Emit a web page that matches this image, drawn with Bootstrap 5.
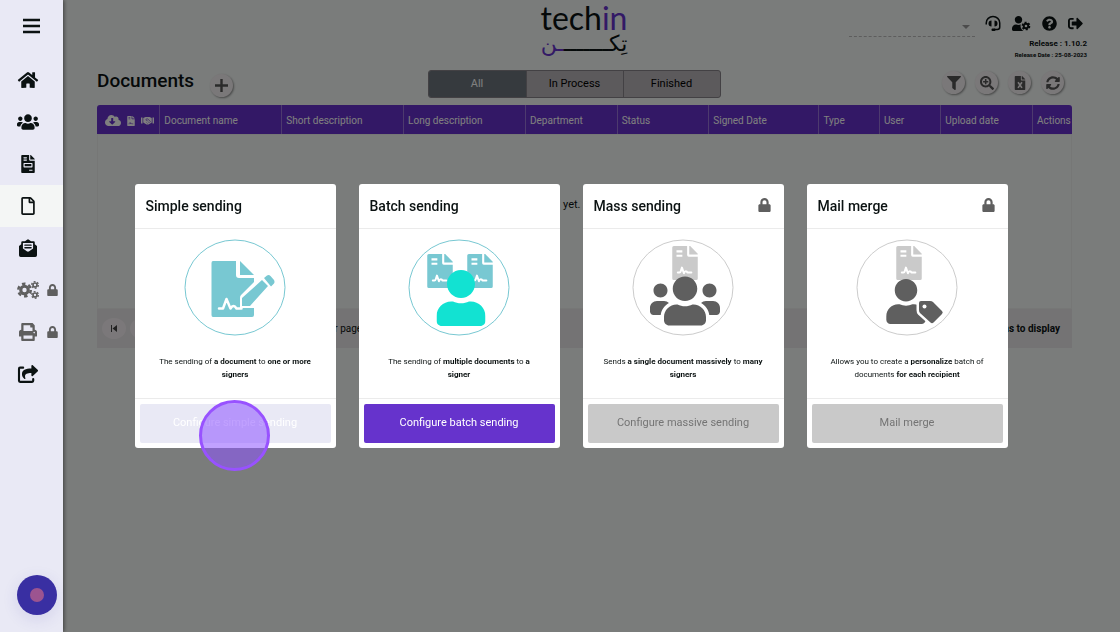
<!DOCTYPE html>
<html lang="en">
<head>
<meta charset="utf-8">
<meta name="viewport" content="width=device-width, initial-scale=1">
<title>Documents</title>
<link href="https://cdn.jsdelivr.net/npm/bootstrap@5.3.0/dist/css/bootstrap.min.css" rel="stylesheet">
<style>
body{font-family:Roboto,"Liberation Sans",sans-serif;background:#f4f8f6;color:#0b1212;font-size:11px;min-height:100vh}
svg{fill:currentColor;display:block;flex:none}
a{color:inherit;text-decoration:none}
.side{width:63px;background:#e9e9f5;z-index:30;box-shadow:1px 0 4px rgba(0,0,0,.5);color:#0b1212}
.side .menu-btn{height:59px;padding:18px 0 0 23px}
.side .entry{height:42px;padding-left:17px;gap:8px}
.side .entry.active{background:#f4f6f5}
.side .locked{color:#5f5f5f}
.side .ico{width:22px;height:18px}
.rec{width:40px;height:40px;background:#392fa2;margin:0 0 17px 17px;box-shadow:0 4px 16px rgba(57,47,162,.12)}
.rec span{width:14px;height:14px;background:#9c5490}
.top{display:grid;grid-template-columns:1fr auto 1fr;height:62px;padding:0 33px 0 18px}
.brand{font-family:Lato,sans-serif;font-size:32px;line-height:36px}
.brand .ar{font-family:"DejaVu Sans",sans-serif;font-size:22px;line-height:16px}
.violet{color:#6633cc}
.org{width:126px;height:22px;border:0;border-bottom:1px dashed #bbb;border-radius:0;background:none;appearance:none}
.orgbox{padding-top:15px;margin-right:10px}
.caret{position:absolute;right:5px;top:25px;border:4px solid transparent;border-top-color:#999;border-bottom:0}
.tools{gap:11px;padding-top:15px;height:36px}
.release{font-size:8px;line-height:14px}
.reldate{font-size:6px;line-height:8px}
.work{padding:0 48px 0 34px}
.bar{display:grid;grid-template-columns:34% auto 1fr;height:43px;padding-top:8px}
h1{font-size:19px;line-height:22px;font-weight:500;margin:0}
.round{width:23px;height:23px;border:0;border-radius:50%;background:#f5f0f2;color:#555;padding:0;box-shadow:1px 1px 2px rgba(0,0,0,.4)}
.round-set{gap:10px;padding:1px 8px 0 0}
.seg{height:28px;border:1px solid #868288;border-radius:3px;overflow:hidden;background:#b9b5b8;margin-left:-1px}
.seg button{width:97px;border:0;border-left:1px solid #868288;background:none;font-size:11px}
.seg button.on{background:#6c757d;color:#fff;border:0}
.docs{table-layout:fixed;width:100%;margin:0;border-collapse:separate;border-spacing:0;border-radius:3px 3px 0 0;overflow:hidden;font-size:10px}
.docs th{background:#6630cc;color:#fff;font-weight:400;height:29px;padding:2px 3px 0 4px;border-right:1px solid #9a75dd;white-space:nowrap}
.docs th:last-child{border-right:0;padding-right:0}
.docs td{height:175px;padding:0;vertical-align:top;border:1px solid #eceeed}
.empty{width:50%;padding:62px 4px 0 0;font-size:11px;line-height:16px}
.pager{height:39px;background:#e9e6e8;padding:0 12px 0 5px;font-size:10px}
.pager .pg{width:24px;height:21px;border:0;border-radius:50%;background:#f6f1f4;color:#444;padding:0}
.pager .per{margin-left:142px}
.shade{inset:0;background:rgba(0,0,0,.5);z-index:10}
.choices{inset:0;z-index:20;padding-left:22px}
.deck{width:873px;gap:23px}
.choice{flex:1 1 0;background:#fff;border-radius:3px;min-width:0}
.choice header{height:45px;padding:0 13px 0 11px;border-bottom:1px solid #ebebeb}
.choice header svg{margin-bottom:3px}
.choice h2{font-size:14px;font-weight:500;margin:0}
.choice .mid{height:169px;padding:10px 19px 0}
.choice .mid p{font-size:8px;line-height:13px;margin:19px 0 0}
.choice b{font-weight:700}
.choice footer{padding:5px;border-top:1px solid #ebebeb}
.choice footer .btn{height:39px;font-size:11px;border:0;border-radius:2px;padding:0;color:#fff;background:#6633cc;opacity:1}
.choice footer .pressed{background:#e9e9f5;color:#fff}
.choice footer .btn:disabled{background:#c9c9c9;color:#747474}
.lock{color:#5f5f5f}
.tap{width:71px;height:71px;border:3px solid #9852ff;background:rgba(142,84,255,.55);left:50%;margin-left:-36px;bottom:-23px}
</style>
</head>
<body class="d-flex">
<svg width="0" height="0" class="position-absolute" aria-hidden="true"><defs>
<symbol id="home" viewBox="0 0 576 512"><path d="M280.37 148.26L96 300.11V464a16 16 0 0 0 16 16l112.06-.29a16 16 0 0 0 15.92-16V368a16 16 0 0 1 16-16h64a16 16 0 0 1 16 16v95.64a16 16 0 0 0 16 16.05L464 480a16 16 0 0 0 16-16V300L295.67 148.26a12.19 12.19 0 0 0-15.3 0zM571.6 251.47L488 182.56V44.05a12 12 0 0 0-12-12h-56a12 12 0 0 0-12 12v72.61L318.47 43a48 48 0 0 0-61 0L4.34 251.47a12 12 0 0 0-1.6 16.9l25.5 31A12 12 0 0 0 45.15 301l235.22-193.74a12.19 12.19 0 0 1 15.3 0L530.9 301a12 12 0 0 0 16.9-1.6l25.5-31a12 12 0 0 0-1.7-16.93z"/></symbol>
<symbol id="users" viewBox="0 0 640 512"><path d="M96 224c35.3 0 64-28.7 64-64s-28.7-64-64-64-64 28.7-64 64 28.7 64 64 64zm448 0c35.3 0 64-28.7 64-64s-28.7-64-64-64-64 28.7-64 64 28.7 64 64 64zm32 32h-64c-17.6 0-33.5 7.1-45.1 18.6 40.3 22.1 68.9 62 75.1 109.4h66c17.7 0 32-14.3 32-32v-32c0-35.3-28.7-64-64-64zm-256 0c61.9 0 112-50.1 112-112S381.9 32 320 32 208 82.1 208 144s50.1 112 112 112zm76.8 32h-8.3c-20.8 10-43.9 16-68.5 16s-47.6-6-68.5-16h-8.3C179.6 288 128 339.6 128 403.2V432c0 26.5 21.5 48 48 48h288c26.5 0 48-21.5 48-48v-28.8c0-63.6-51.6-115.2-115.2-115.2zm-223.7-13.4C161.5 263.1 145.6 256 128 256H64c-35.3 0-64 28.7-64 64v32c0 17.7 14.3 32 32 32h65.9c6.3-47.4 34.9-87.3 75.2-109.4z"/></symbol>
<symbol id="user" viewBox="0 0 448 512"><path d="M224 256c70.7 0 128-57.3 128-128S294.7 0 224 0 96 57.3 96 128s57.3 128 128 128zm89.6 32h-16.7c-22.2 10.2-46.9 16-72.9 16s-50.6-5.8-72.9-16h-16.7C60.2 288 0 348.2 0 422.4V464c0 26.5 21.5 48 48 48h352c26.5 0 48-21.5 48-48v-41.6c0-74.2-60.2-134.4-134.4-134.4z"/></symbol>
<symbol id="lock" viewBox="0 0 448 512"><path d="M400 224h-24v-72C376 68.2 307.8 0 224 0S72 68.2 72 152v72H48c-26.5 0-48 21.5-48 48v192c0 26.5 21.5 48 48 48h352c26.5 0 48-21.5 48-48V272c0-26.5-21.5-48-48-48zm-104 0H152v-72c0-39.7 32.3-72 72-72s72 32.3 72 72v72z"/></symbol>
<symbol id="file" viewBox="0 0 384 512"><path d="M369.9 97.9L286 14C277 5 264.8-.1 252.1-.1H48C21.5 0 0 21.5 0 48v416c0 26.5 21.5 48 48 48h288c26.5 0 48-21.5 48-48V131.9c0-12.7-5.1-25-14.1-34zM332.1 128H256V51.9l76.1 76.1zM48 464V48h160v104c0 13.3 10.7 24 24 24h104v288H48z"/></symbol>
<symbol id="invoice" viewBox="0 0 384 512"><path d="M288 256H96v64h192v-64zm89-151L279.1 7c-4.5-4.5-10.6-7-17-7H256v128h128v-6.1c0-6.3-2.5-12.4-7-16.9zm-153 31V0H24C10.7 0 0 10.7 0 24v464c0 13.3 10.7 24 24 24h336c13.3 0 24-10.7 24-24V160H248c-13.2 0-24-10.8-24-24zM64 72c0-4.42 3.58-8 8-8h80c4.42 0 8 3.58 8 8v16c0 4.42-3.58 8-8 8H72c-4.42 0-8-3.58-8-8V72zm0 64c0-4.42 3.58-8 8-8h80c4.42 0 8 3.58 8 8v16c0 4.42-3.58 8-8 8H72c-4.42 0-8-3.58-8-8v-16zm256 304c0 4.42-3.58 8-8 8h-80c-4.42 0-8-3.58-8-8v-16c0-4.42 3.58-8 8-8h80c4.42 0 8 3.58 8 8v16zm0-200v96c0 8.84-7.16 16-16 16H80c-8.84 0-16-7.16-16-16v-96c0-8.84 7.16-16 16-16h224c8.84 0 16 7.16 16 16z"/></symbol>
<symbol id="contract" viewBox="0 0 384 512"><path d="M224 0H24Q0 0 0 24V488Q0 512 24 512H360Q384 512 384 488V160H248Q224 160 224 136Z"/><path d="M64 80H152M64 146H152" stroke="var(--ink,#fff)" stroke-width="32"/><path d="M256 0V128H384V115L270 0Z"/><path d="M84 400h24q14 0 20-20l18-54 30 84q10-30 28-30t24 18h60" fill="none" stroke="var(--ink,#fff)" stroke-width="30" stroke-linecap="round" stroke-linejoin="round"/></symbol>
<symbol id="mail" viewBox="0 0 512 512"><path d="M0 200 64 152V96Q64 64 96 64H170L230 18Q256-2 282 18L342 64H416Q448 64 448 96V152L512 200V464Q512 512 464 512H48Q0 512 0 464Z"/><path d="M112 112H400V270L290 350Q256 374 222 350L112 270Z" fill="#e9e9f5"/><path d="M168 176H344M168 250H344" stroke="currentColor" stroke-width="38" stroke-linecap="round"/></symbol>
<symbol id="gear" viewBox="0 0 24 24"><g fill="none" stroke="currentColor"><circle cx="12" cy="12" r="6" stroke-width="5"/><circle cx="12" cy="12" r="10" stroke-width="4" stroke-dasharray="5.6 4.87"/></g></symbol>
<symbol id="print" viewBox="0 0 512 512"><path d="M448 192V77.25c0-8.49-3.37-16.62-9.37-22.63L393.37 9.37c-6-6-14.14-9.37-22.63-9.37H96C78.33 0 64 14.33 64 32v160c-35.35 0-64 28.65-64 64v112c0 8.84 7.16 16 16 16h48v96c0 17.67 14.33 32 32 32h320c17.67 0 32-14.33 32-32v-96h48c8.84 0 16-7.16 16-16V256c0-35.35-28.65-64-64-64zm-64 256H128v-96h256v96zm0-224H128V64h192v48c0 8.84 7.16 16 16 16h48v96zm48 72c-13.25 0-24-10.75-24-24 0-13.26 10.75-24 24-24s24 10.74 24 24c0 13.25-10.75 24-24 24z"/></symbol>
<symbol id="share" viewBox="0 0 576 512"><path d="M150 76H62Q32 76 32 106V450Q32 480 62 480H406Q436 480 436 450V400" fill="none" stroke="currentColor" stroke-width="60" stroke-linecap="round"/><path d="M568 177 424 313C409 327 384 317 384 296V224C236 226 178 262 214 378 218 393 201 404 188 395 150 367 116 315 116 262 116 132 222 98 384 96V24C384 3 409-7 424 7L568 143Q578 155 568 177Z"/></symbol>
<symbol id="filter" viewBox="0 0 512 512"><path d="M487.976 0H24.028C2.71 0-8.047 25.866 7.058 40.971L192 225.941V432c0 7.831 3.821 15.17 10.237 19.662l80 55.98C298.02 518.69 320 507.493 320 487.98V225.941l184.947-184.97C520.021 25.896 509.338 0 487.976 0z"/></symbol>
<symbol id="zoomin" viewBox="0 0 512 512"><path d="M304 192v32c0 6.6-5.4 12-12 12h-56v56c0 6.6-5.4 12-12 12h-32c-6.6 0-12-5.4-12-12v-56h-56c-6.6 0-12-5.4-12-12v-32c0-6.6 5.4-12 12-12h56v-56c0-6.6 5.4-12 12-12h32c6.6 0 12 5.4 12 12v56h56c6.6 0 12 5.4 12 12zm201 284.7L476.7 505c-9.4 9.4-24.6 9.4-33.9 0L343 405.3c-4.5-4.5-7-10.6-7-17V372c-35.3 27.6-79.7 44-128 44C93.1 416 0 322.9 0 208S93.1 0 208 0s208 93.1 208 208c0 48.3-16.4 92.7-44 128h16.3c6.4 0 12.5 2.5 17 7l99.7 99.7c9.3 9.4 9.3 24.6 0 34zM344 208c0-75.2-60.8-136-136-136S72 132.8 72 208s60.8 136 136 136 136-60.8 136-136z"/></symbol>
<symbol id="excel" viewBox="0 0 384 512"><path d="M224 0H24Q0 0 0 24V488Q0 512 24 512H360Q384 512 384 488V160H248Q224 160 224 136Z"/><path d="M256 0V128H384V115L270 0Z"/><path d="M120 226 264 436M264 226 120 436" stroke="#f5f0f2" stroke-width="58"/></symbol>
<symbol id="sync" viewBox="0 0 512 512"><path d="M370.72 133.28C339.458 104.008 298.888 87.962 255.848 88c-77.458.068-144.328 53.178-162.791 126.85-1.344 5.363-6.122 9.15-11.651 9.15H24.103c-7.498 0-13.194-6.807-11.807-14.176C33.933 94.924 134.813 8 256 8c66.448 0 126.791 26.136 171.315 68.685L463.03 40.97C478.149 25.851 504 36.559 504 57.941V192c0 13.255-10.745 24-24 24H345.941c-21.382 0-32.09-25.851-16.971-40.971l41.75-41.749zM32 296h134.059c21.382 0 32.09 25.851 16.971 40.971l-41.75 41.75c31.262 29.273 71.835 45.319 114.876 45.28 77.418-.07 144.315-53.144 162.787-126.849 1.344-5.363 6.122-9.15 11.651-9.15h57.304c7.498 0 13.194 6.807 11.807 14.176C478.067 417.076 377.187 504 256 504c-66.448 0-126.791-26.136-171.315-68.685L48.97 471.03C33.851 486.149 8 475.441 8 454.059V320c0-13.255 10.745-24 24-24z"/></symbol>
<symbol id="help" viewBox="0 0 512 512"><path d="M504 256c0 136.997-111.043 248-248 248S8 392.997 8 256C8 119.083 119.043 8 256 8s248 111.083 248 248zM262.655 90c-54.497 0-89.255 22.957-116.549 63.758-3.536 5.286-2.353 12.415 2.715 16.258l34.699 26.31c5.205 3.947 12.621 3.008 16.665-2.122 17.864-22.658 30.113-35.797 57.303-35.797 20.429 0 45.698 13.148 45.698 32.958 0 14.976-12.363 22.667-32.534 33.976C247.128 238.528 216 254.941 216 296v4c0 6.627 5.373 12 12 12h56c6.627 0 12-5.373 12-12v-1.333c0-28.462 83.186-29.647 83.186-106.667 0-58.002-60.165-102-116.531-102zM256 338c-25.365 0-46 20.635-46 46 0 25.364 20.635 46 46 46s46-20.636 46-46c0-25.365-20.635-46-46-46z"/></symbol>
<symbol id="exit" viewBox="0 0 512 512"><path d="M497 273L329 441c-15 15-41 4.5-41-17v-96H152c-13.3 0-24-10.7-24-24v-96c0-13.3 10.7-24 24-24h136V88c0-21.4 25.9-32 41-17l168 168c9.3 9.4 9.3 24.6 0 34zM192 436v-40c0-6.6-5.4-12-12-12H96c-17.7 0-32-14.3-32-32V160c0-17.7 14.3-32 32-32h84c6.6 0 12-5.4 12-12V76c0-6.6-5.4-12-12-12H96c-53 0-96 43-96 96v192c0 53 43 96 96 96h84c6.6 0 12-5.4 12-12z"/></symbol>
<symbol id="cloud" viewBox="0 0 640 512"><path d="M537.6 226.6c4.1-10.7 6.4-22.4 6.4-34.6 0-53-43-96-96-96-19.7 0-38.1 6-53.3 16.2C367 64.2 315.3 32 256 32c-88.4 0-160 71.6-160 160 0 2.7.1 5.4.2 8.1C40.2 219.8 0 273.2 0 336c0 79.5 64.5 144 144 144h368c70.7 0 128-57.3 128-128 0-61.9-44-113.6-102.4-125.4zm-132.9 88.7L299.3 420.7c-6.2 6.2-16.4 6.2-22.6 0L171.3 315.3c-10.1-10.1-2.9-27.3 11.3-27.3H248V176c0-8.8 7.2-16 16-16h48c8.8 0 16 7.2 16 16v112h65.4c14.2 0 21.4 17.2 11.3 27.3z"/></symbol>
<symbol id="hands" viewBox="0 0 26 18"><path d="M0 3h3v12H0zM23 3h3v12h-3zM4.500 4 9 2h8l4.500 2v9L15 17h-4L4.500 13z"/><path d="M13 4 9.500 8q2 2 4 0l1-1 5 4.500M11 13l2 2M14 11l3 3" fill="none" stroke="#6630cc" stroke-width="1.300"/></symbol>
<symbol id="headset" viewBox="0 0 32 32"><g fill="none" stroke="currentColor" stroke-width="3"><path d="M2.500 18V15a13.500 13 0 0 1 27 0V23q0 5-5 5H18"/></g><path d="M13 10v12q-6 0-6-6t6-6zM19 10v12q6 0 6-6t-6-6z"/><rect x="13" y="26" width="8" height="5" rx="2"/></symbol>
</defs></svg>

<nav class="side d-flex flex-column position-sticky top-0 vh-100 flex-shrink-0" aria-label="Main">
  <button class="menu-btn btn border-0 rounded-0 d-flex align-items-start" aria-label="Menu"><svg width="17" height="16" viewBox="0 0 17 16"><path d="M0 2h17M0 8h17M0 14h17" stroke="#0b1212" stroke-width="2.400"/></svg></button>
  <a href="#" class="entry d-flex align-items-center" aria-label="Home"><svg class="ico"><use href="#home"/></svg></a>
  <a href="#" class="entry d-flex align-items-center" aria-label="Contacts"><svg class="ico"><use href="#users"/></svg></a>
  <a href="#" class="entry d-flex align-items-center" aria-label="Templates"><svg class="ico"><use href="#invoice"/></svg></a>
  <a href="#" class="entry active d-flex align-items-center" aria-label="Documents"><svg class="ico"><use href="#file"/></svg></a>
  <a href="#" class="entry d-flex align-items-center" aria-label="Inbox"><svg class="ico"><use href="#mail"/></svg></a>
  <a href="#" class="entry locked d-flex align-items-center" aria-label="Settings"><svg class="ico" viewBox="0 0 22 18"><use href="#gear" x="0" y="1" width="15" height="16"/><use href="#gear" x="14" y="0" width="8" height="8"/><use href="#gear" x="14" y="10" width="8" height="8"/></svg><svg width="11" height="12"><use href="#lock"/></svg></a>
  <a href="#" class="entry locked d-flex align-items-center" aria-label="Print"><svg class="ico"><use href="#print"/></svg><svg width="11" height="12"><use href="#lock"/></svg></a>
  <a href="#" class="entry d-flex align-items-center" aria-label="Share"><svg class="ico"><use href="#share"/></svg></a>
  <button class="rec border-0 p-0 rounded-circle mt-auto d-flex align-items-center justify-content-center" aria-label="Record"><span class="rounded-circle"></span></button>
</nav>

<main class="flex-grow-1">
  <div class="top">
    <div></div>
    <div class="brand text-center"><div>tech<span class="violet">in</span></div><div class="ar" lang="ar" dir="rtl">تِكـــــــ<span class="violet">ـن</span></div></div>
    <div class="text-end">
      <div class="d-flex justify-content-end">
        <div class="orgbox position-relative"><select class="org d-block" aria-label="Organization"><option></option></select><span class="caret"></span></div>
        <div class="tools d-flex pe-1">
          <a href="#" aria-label="Support"><svg width="16" height="17"><use href="#headset"/></svg></a>
          <a href="#" aria-label="Account"><svg width="19" height="17" viewBox="0 0 19 17"><use href="#user" x="0" y="1" width="13" height="15"/><circle cx="14" cy="11" r="5.500" fill="#f4f8f6"/><use href="#gear" x="9.500" y="6.500" width="9" height="9"/></svg></a>
          <a href="#" aria-label="Help"><svg width="15" height="17"><use href="#help"/></svg></a>
          <a href="#" aria-label="Log out"><svg width="15" height="17"><use href="#exit"/></svg></a>
        </div>
      </div>
      <div class="release fw-bold">Release : 1.10.2</div>
      <div class="reldate fw-bold">Release Date : 25-08-2023</div>
    </div>
  </div>

  <div class="work">
    <div class="bar">
      <div class="d-flex"><h1>Documents</h1><button class="round ms-3 mt-1 d-flex align-items-center justify-content-center" aria-label="Add"><svg width="13" height="13" viewBox="0 0 13 13"><path d="M6.500 0v13M0 6.500h13" stroke="#555" stroke-width="2.400"/></svg></button></div>
      <div class="seg d-flex"><button class="on">All</button><button>In Process</button><button>Finished</button></div>
      <div class="round-set d-flex justify-content-end">
        <button class="round d-flex align-items-center justify-content-center" aria-label="Filter"><svg width="14" height="14"><use href="#filter"/></svg></button>
        <button class="round d-flex align-items-center justify-content-center" aria-label="Search"><svg width="14" height="14"><use href="#zoomin"/></svg></button>
        <button class="round d-flex align-items-center justify-content-center" aria-label="Export"><svg width="14" height="14"><use href="#excel"/></svg></button>
        <button class="round d-flex align-items-center justify-content-center" aria-label="Refresh"><svg width="14" height="14"><use href="#sync"/></svg></button>
      </div>
    </div>
    <table class="docs">
      <colgroup><col style="width:6.5%"><col style="width:12.5%"><col style="width:12.5%"><col style="width:12.5%"><col style="width:9.4%"><col style="width:9.4%"><col style="width:11.3%"><col style="width:6.2%"><col style="width:6.3%"><col style="width:9.4%"><col style="width:4%"></colgroup>
      <thead><tr>
        <th aria-label="Status icons"><div class="d-flex align-items-center ps-1 gap-1"><svg width="16" height="13"><use href="#cloud"/></svg><svg width="12" height="10" style="--ink:#6630cc"><use href="#contract"/></svg><svg width="13" height="9"><use href="#hands"/></svg></div></th>
        <th>Document name</th><th>Short description</th><th>Long description</th><th>Department</th><th>Status</th><th>Signed Date</th><th>Type</th><th>User</th><th>Upload date</th><th>Actions</th>
      </tr></thead>
      <tbody><tr><td colspan="11"><div class="empty text-end">yet.</div></td></tr></tbody>
    </table>
    <div class="pager d-flex align-items-center">
      <button class="pg d-flex align-items-center justify-content-center" aria-label="First page"><svg width="6" height="7" viewBox="0 0 6 7"><path d="M0 0h1v7H0zM6 0v7L1.500 3.500z"/></svg></button>
      <button class="pg ms-1" aria-label="Previous page"></button>
      <span class="per">items per page</span>
      <span class="ms-auto fw-bold">items to display</span>
    </div>
  </div>
</main>

<div class="shade position-fixed"></div>
<div class="choices position-fixed d-flex align-items-center justify-content-center" role="dialog" aria-label="Choose a sending type">
  <div class="deck d-flex">
    <section class="choice position-relative">
      <header class="d-flex align-items-center justify-content-between"><h2>Simple sending</h2></header>
      <div class="mid text-center">
        <svg class="mx-auto" width="102" height="97" viewBox="0 0 102 97" color="#78c8d2"><ellipse cx="51" cy="48.500" rx="50" ry="47.500" fill="none" stroke="currentColor"/><path d="M29 22H52V36Q52 39 55 39H70V43L57 56Q56 57 56 59V69H70V76Q70 78 68 78H29Q27.500 78 27.500 76V24Q27.500 22 29 22Z"/><path d="M56 22 70 36H56Z"/><path d="M35 69.500h4l3.500-9.500 4 9.500q3-5 6 0h5" fill="none" stroke="#fff" stroke-width="2.500" stroke-linecap="round" stroke-linejoin="round"/><path d="M58 59 78 41 84 47 66 67H58ZM80 39 83 36.500Q85 35.500 86.500 37L90 41Q91 43 90 44.500L87 47.500Z"/></svg>
        <p>The sending of <b>a document</b> to <b>one or more signers</b></p>
      </div>
      <footer><button class="btn pressed w-100">Configure simple sending</button></footer>
      <span class="tap position-absolute rounded-circle"></span>
    </section>
    <section class="choice">
      <header class="d-flex align-items-center justify-content-between"><h2>Batch sending</h2></header>
      <div class="mid text-center">
        <svg class="mx-auto" width="102" height="97" viewBox="0 0 102 97" color="#78c8d2"><ellipse cx="51" cy="48.500" rx="50" ry="47.500" fill="none" stroke="currentColor"/><use href="#contract" x="19" y="15" width="26" height="34"/><use href="#contract" x="59" y="15" width="26" height="34"/><g color="#12e2d2"><use href="#user" x="28.500" y="31" width="49" height="56"/></g></svg>
        <p>The sending of <b>multiple documents</b> to <b>a signer</b></p>
      </div>
      <footer><button class="btn w-100">Configure batch sending</button></footer>
    </section>
    <section class="choice">
      <header class="d-flex align-items-center justify-content-between"><h2>Mass sending</h2><svg class="lock" width="13" height="14"><use href="#lock"/></svg></header>
      <div class="mid text-center">
        <svg class="mx-auto" width="102" height="97" viewBox="0 0 102 97"><ellipse cx="51" cy="48.500" rx="50" ry="47.500" fill="none" stroke="#ccc"/><g color="#cacaca"><use href="#contract" x="40" y="7" width="26" height="34"/></g><g color="#5f5f5f"><use href="#users" x="18" y="34" width="70" height="56"/></g></svg>
        <p>Sends <b>a single document massively</b> to <b>many signers</b></p>
      </div>
      <footer><button class="btn w-100" disabled>Configure massive sending</button></footer>
    </section>
    <section class="choice">
      <header class="d-flex align-items-center justify-content-between"><h2>Mail merge</h2><svg class="lock" width="13" height="14"><use href="#lock"/></svg></header>
      <div class="mid text-center">
        <svg class="mx-auto" width="102" height="97" viewBox="0 0 102 97"><ellipse cx="51" cy="48.500" rx="50" ry="47.500" fill="none" stroke="#ccc"/><g color="#cacaca"><use href="#contract" x="40" y="7" width="26" height="34"/></g><g color="#5f5f5f"><use href="#user" x="30" y="40" width="40" height="45"/><path d="M65 62h9q2 0 3 1l9 9q1.500 1.500 0 3l-8.500 8.500q-1.500 1.500-3 0L64 74q-1-1-1-3v-7q0-2 2-2z" stroke="#fff" stroke-width="5" paint-order="stroke" fill="currentColor"/><circle cx="68.500" cy="67.500" r="2" fill="#fff"/></g></svg>
        <p>Allows you to create a <b>personalize</b> batch of documents <b>for each recipient</b></p>
      </div>
      <footer><button class="btn w-100" disabled>Mail merge</button></footer>
    </section>
  </div>
</div>
<script src="https://cdn.jsdelivr.net/npm/bootstrap@5.3.0/dist/js/bootstrap.bundle.min.js"></script>
</body>
</html>
